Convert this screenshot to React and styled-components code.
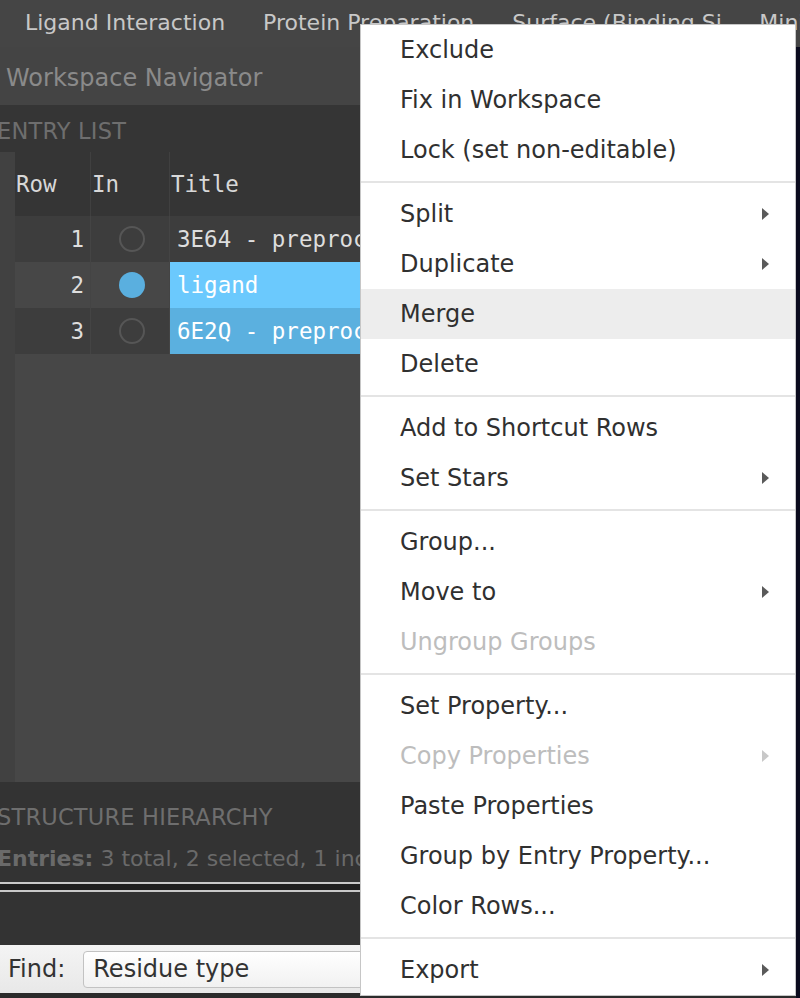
import React from "react";
import styled, { createGlobalStyle } from "styled-components";

const GlobalStyle = createGlobalStyle`
  html, body { margin: 0; padding: 0; background: #333; }
  body { width: 800px; height: 998px; overflow: hidden; font-family: "DejaVu Sans", sans-serif; }
  #root { width: 800px; height: 998px; }
`;

const Root = styled.div`
  position: relative;
  width: 800px;
  height: 998px;
  display: flex;
  flex-direction: column;
  overflow: hidden;
  background: #333;
`;

const TabBar = styled.div`
  height: 47px;
  flex: none;
  display: flex;
  align-items: center;
  padding-left: 6px;
  padding-bottom: 2px;
  box-sizing: border-box;
  background: #454545;
  white-space: nowrap;
  overflow: hidden;
`;

const Tab = styled.div`
  flex: none;
  padding: 0 19px;
  width: ${(p) => (p.$w ? `${p.$w}px` : "auto")};
  overflow: hidden;
  font-size: 22px;
  color: #c8c8c8;
`;

const Main = styled.div`
  flex: 1;
  display: flex;
  min-height: 0;
`;

const LeftPanel = styled.div`
  width: 796px;
  flex: none;
  display: flex;
  flex-direction: column;
  background: #444;
`;

const Viewer = styled.div`
  flex: 1;
  background: #0b0b1e;
`;

const PanelTitle = styled.div`
  height: 58px;
  flex: none;
  display: flex;
  align-items: center;
  padding-left: 6px;
  padding-top: 3px;
  box-sizing: border-box;
  font-size: 24px;
  color: #8a8a8a;
  background: #444;
`;

const SectionHeader = styled.div`
  height: ${(p) => p.$h || 47}px;
  flex: none;
  display: flex;
  align-items: center;
  box-sizing: border-box;
  padding-top: ${(p) => p.$pt || 0}px;
  margin-left: -3px;
  font-size: 22.5px;
  color: #6e6e6e;
  letter-spacing: 0.2px;
`;

const EntrySection = styled.div`
  background: #353535;
`;

const TableArea = styled.div`
  flex: 1;
  display: flex;
  background: #474747;
  min-height: 0;
`;

const Gutter = styled.div`
  width: 15px;
  flex: none;
  background: #414141;
`;

const Table = styled.div`
  display: grid;
  grid-template-columns: 76px 79px 460px;
  grid-auto-rows: 46px;
  grid-template-rows: 64px;
  align-content: start;
  font-family: "DejaVu Sans Mono", monospace;
  font-size: 22.5px;
`;

const HeadCell = styled.div`
  background: #353535;
  border-right: 1px solid #404040;
  display: flex;
  align-items: center;
  padding-left: 1px;
  color: #d8d8d8;
`;

const Cell = styled.div`
  display: flex;
  align-items: center;
  justify-content: ${(p) => p.$align || "flex-start"};
  padding: ${(p) => p.$pad || "0"};
  background: ${(p) => p.$bg || (p.$alt ? "#474747" : "#3d3d3d")};
  border-right: ${(p) => (p.$noBorder ? "none" : "1px solid #444")};
  color: ${(p) => p.$color || "#dedede"};
  white-space: nowrap;
  overflow: hidden;
`;

const Dot = styled.span`
  width: 26px;
  height: 26px;
  box-sizing: border-box;
  border-radius: 50%;
  border: ${(p) => (p.$on ? "none" : "2px solid #565656")};
  background: ${(p) => (p.$on ? "#5aafdf" : "transparent")};
`;

const HierarchySection = styled.div`
  flex: none;
  height: 100px;
  background: #333;
  display: flex;
  flex-direction: column;
`;

const EntriesLine = styled.div`
  margin-left: -3px;
  margin-top: -6px;
  font-size: 22px;
  color: #6a6a6a;
  white-space: nowrap;
  b { font-weight: bold; }
`;

const Splitter = styled.div`
  flex: none;
  height: 10px;
  box-sizing: border-box;
  border-top: 2px solid #c9c9c9;
  border-bottom: 2px solid #c9c9c9;
  background: #1f1f1f;
`;

const DarkGap = styled.div`
  flex: none;
  height: 53px;
  background: #333;
`;

const FindBar = styled.div`
  flex: none;
  height: 48px;
  display: flex;
  align-items: center;
  gap: 18px;
  padding-left: 8px;
  background: linear-gradient(#f4f4f4, #e8e8e8);
  font-size: 24px;
  color: #333;
`;

const FindInput = styled.div`
  width: 420px;
  height: 37px;
  box-sizing: border-box;
  display: flex;
  align-items: center;
  padding-left: 9px;
  border: 1px solid #c2c2c2;
  border-radius: 4px;
  background: linear-gradient(#ffffff, #f1f1f1);
  color: #333;
`;

const BottomEdge = styled.div`
  flex: none;
  height: 5px;
  background: #2b2b2b;
`;

const Menu = styled.div`
  position: absolute;
  left: 360px;
  top: 24px;
  width: 436px;
  box-sizing: border-box;
  background: #fff;
  border: 1px solid #c6c6c6;
  display: flex;
  flex-direction: column;
  font-size: 24px;
`;

const MenuItem = styled.div`
  height: 50px;
  flex: none;
  display: flex;
  align-items: center;
  justify-content: space-between;
  padding: 0 25px 0 39px;
  background: ${(p) => (p.$hover ? "#ededed" : "transparent")};
  color: ${(p) => (p.$disabled ? "#bdbdbd" : "#303030")};
  white-space: nowrap;
`;

const Separator = styled.div`
  height: 14px;
  flex: none;
  display: flex;
  align-items: center;
  &::after {
    content: "";
    display: block;
    width: 100%;
    height: 2px;
    background: #e4e4e4;
  }
`;

const Arrow = ({ disabled }) => (
  <svg width="9" height="14" viewBox="0 0 9 14">
    <polygon points="1,1 8,7 1,13" fill={disabled ? "#c8c8c8" : "#5a5a5a"} />
  </svg>
);

const menu = [
  { t: "Exclude" },
  { t: "Fix in Workspace" },
  { t: "Lock (set non-editable)" },
  "sep",
  { t: "Split", sub: true },
  { t: "Duplicate", sub: true },
  { t: "Merge", hover: true },
  { t: "Delete" },
  "sep",
  { t: "Add to Shortcut Rows" },
  { t: "Set Stars", sub: true },
  "sep",
  { t: "Group..." },
  { t: "Move to", sub: true },
  { t: "Ungroup Groups", disabled: true },
  "sep",
  { t: "Set Property..." },
  { t: "Copy Properties", sub: true, disabled: true },
  { t: "Paste Properties" },
  { t: "Group by Entry Property..." },
  { t: "Color Rows..." },
  "sep",
  { t: "Export", sub: true },
];

const rows = [
  { n: 1, on: false, title: "3E64 - preprocessed", alt: false, bg: null },
  { n: 2, on: true, title: "ligand", alt: true, bg: "#6bc9fd" },
  { n: 3, on: false, title: "6E2Q - preprocessed", alt: false, bg: "#5bb0df" },
];

export default function App() {
  return (
    <Root>
      <GlobalStyle />
      <TabBar>
        <Tab>Ligand Interaction</Tab>
        <Tab>Protein Preparation</Tab>
        <Tab $w={209}>Surface (Binding Si</Tab>
        <Tab>Minimize</Tab>
      </TabBar>
      <Main>
        <LeftPanel>
          <PanelTitle>Workspace Navigator</PanelTitle>
          <EntrySection>
            <SectionHeader $pt={4}>ENTRY LIST</SectionHeader>
          </EntrySection>
          <TableArea>
            <Gutter />
            <Table>
              <HeadCell>Row</HeadCell>
              <HeadCell>In</HeadCell>
              <HeadCell>Title</HeadCell>
              {rows.map((r) => (
                <React.Fragment key={r.n}>
                  <Cell $alt={r.alt} $align="flex-end" $pad="0 6px 0 0">
                    {r.n}
                  </Cell>
                  <Cell $alt={r.alt} $align="center" $pad="0 0 0 3px">
                    <Dot $on={r.on} />
                  </Cell>
                  <Cell
                    $alt={r.alt}
                    $bg={r.bg}
                    $pad="0 0 0 7px"
                    $noBorder
                    $color={r.bg ? "#ffffff" : "#dedede"}
                  >
                    {r.title}
                  </Cell>
                </React.Fragment>
              ))}
            </Table>
          </TableArea>
          <HierarchySection>
            <SectionHeader $h={70}>STRUCTURE HIERARCHY</SectionHeader>
            <EntriesLine>
              <b>Entries:</b> 3 total, 2 selected, 1 included
            </EntriesLine>
          </HierarchySection>
          <Splitter />
          <DarkGap />
          <FindBar>
            <span>Find:</span>
            <FindInput>Residue type</FindInput>
          </FindBar>
          <BottomEdge />
        </LeftPanel>
        <Viewer />
      </Main>
      <Menu>
        {menu.map((m, i) =>
          m === "sep" ? (
            <Separator key={i} />
          ) : (
            <MenuItem key={i} $hover={m.hover} $disabled={m.disabled}>
              <span>{m.t}</span>
              {m.sub && <Arrow disabled={m.disabled} />}
            </MenuItem>
          )
        )}
      </Menu>
    </Root>
  );
}
